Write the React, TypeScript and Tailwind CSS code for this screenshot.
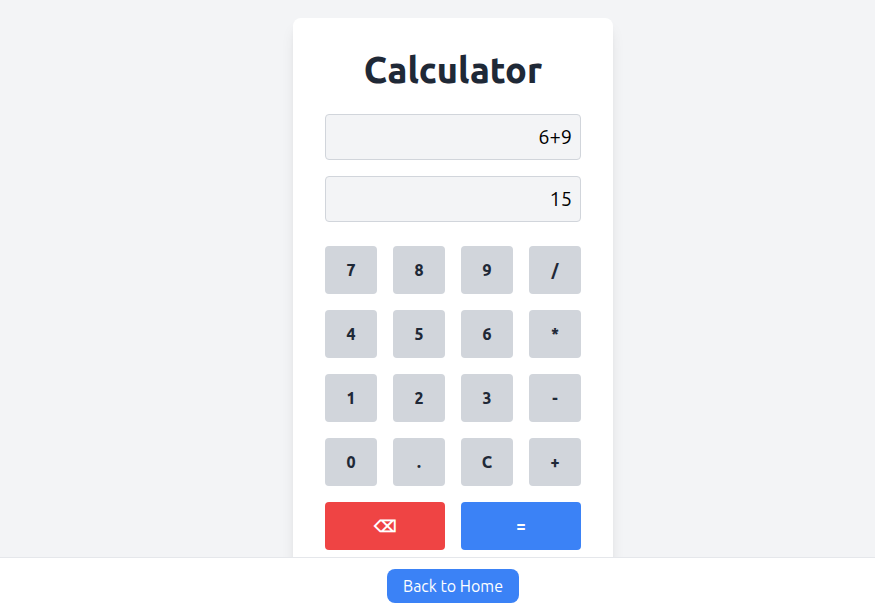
const keys = ['7','8','9','/','4','5','6','*','1','2','3','-','0','.','C','+'];

export default function App() {
  return (
    <div className="flex h-[610px] flex-col overflow-hidden bg-[#f3f4f6] font-['Ubuntu','Noto_Sans',sans-serif]">
      <main className="flex min-h-0 flex-1 items-start justify-center overflow-hidden pt-[18px] pl-[31px]">
        <div className="w-80 shrink-0 rounded-lg bg-white p-8 shadow-lg">
          <h1 className="mb-6 text-center text-4xl font-extrabold text-[#1f2937]">Calculator</h1>
          <div className="mb-4 flex h-[46px] items-center justify-end rounded-sm border border-[#d1d5db] bg-[#f3f4f6] px-2 text-xl text-black">6+9</div>
          <div className="mb-6 flex h-[46px] items-center justify-end rounded-sm border border-[#d1d5db] bg-[#f3f4f6] px-2 text-xl text-black">15</div>
          <div className="grid grid-cols-4 gap-4">
            {keys.map((k) => (
              <button key={k} className="h-12 rounded-sm bg-[#d1d5db] text-base font-extrabold text-[#1f2937]">{k}</button>
            ))}
            <button className="col-span-2 h-12 rounded-sm bg-[#ef4444] font-extrabold text-white">⌫</button>
            <button className="col-span-2 h-12 rounded-sm bg-[#3b82f6] font-extrabold text-white">=</button>
          </div>
        </div>
      </main>
      <footer className="flex h-[53px] shrink-0 items-start justify-center border-t border-[#e5e7eb] bg-white pt-[11px] pl-[31px]">
        <button className="h-[34px] w-[132px] rounded-lg bg-[#3b82f6] text-base text-white">Back to Home</button>
      </footer>
    </div>
  );
}
